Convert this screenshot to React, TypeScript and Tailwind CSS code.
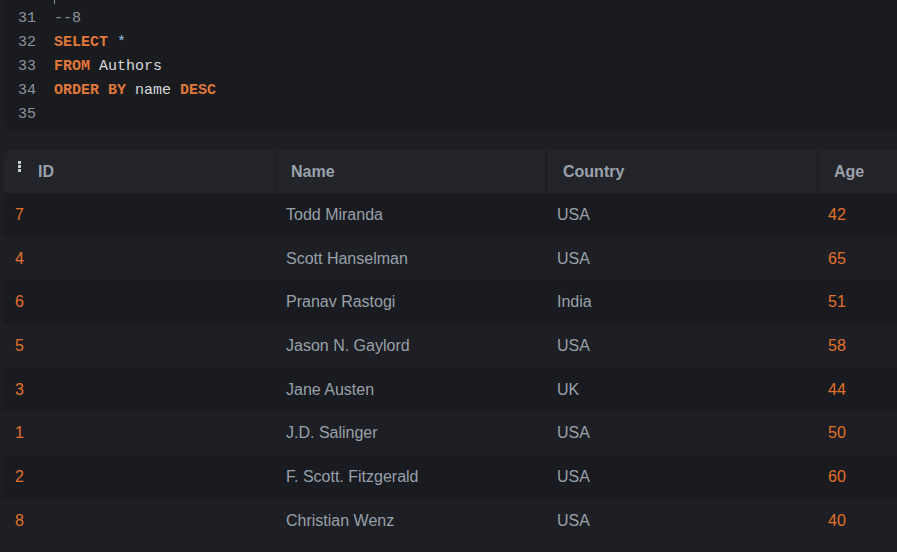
import React from "react";

const rows = [
  { id: 7, name: "Todd Miranda", country: "USA", age: 42 },
  { id: 4, name: "Scott Hanselman", country: "USA", age: 65 },
  { id: 6, name: "Pranav Rastogi", country: "India", age: 51 },
  { id: 5, name: "Jason N. Gaylord", country: "USA", age: 58 },
  { id: 3, name: "Jane Austen", country: "UK", age: 44 },
  { id: 1, name: "J.D. Salinger", country: "USA", age: 50 },
  { id: 2, name: "F. Scott. Fitzgerald", country: "USA", age: 60 },
  { id: 8, name: "Christian Wenz", country: "USA", age: 40 },
];

const K = ({ children }: { children: React.ReactNode }) => (
  <span className="font-bold text-[#e0783a]">{children}</span>
);

export default function App() {
  const lines: { n: number; c: React.ReactNode }[] = [
    { n: 31, c: <span className="text-[#8b939e]">--8</span> },
    { n: 32, c: <><K>SELECT</K> <span className="text-[#9cc3e6]">*</span></> },
    { n: 33, c: <><K>FROM</K> <span className="text-[#d6d8dc]">Authors</span></> },
    { n: 34, c: <><K>ORDER BY</K> <span className="text-[#d6d8dc]">name</span> <K>DESC</K></> },
    { n: 35, c: null },
  ];
  return (
    <div className="w-[897px] h-[552px] overflow-hidden bg-[#1e1f24] pl-[4px]" style={{ fontFamily: '"Liberation Sans", Arial, sans-serif' }}>
      <div className="relative h-[130px] bg-[#1a1b1f] rounded-bl-[8px] pt-[7px]" style={{ fontFamily: '"Liberation Mono", monospace' }}>
        <div className="absolute left-[50px] top-0 w-px h-[4px] bg-[#8b939e]" />
        {lines.map((l) => (
          <div key={l.n} className="flex h-[24px] items-center text-[15px] whitespace-pre">
            <div className="w-[32px] text-right text-[#8b939e]">{l.n}</div>
            <div className="pl-[18px]">{l.c}</div>
          </div>
        ))}
      </div>
      <div className="mt-[20px] w-[1090px]">
        <div className="flex h-[43px] bg-[#232429] rounded-tl-[6px] font-bold text-[16px] text-[#9aa1ab]">
          <div className="w-[272px] flex items-center border-r border-[#1b1c20]">
            <div className="ml-[14px] w-[3px] flex flex-col gap-[1px] mr-[17px] -mt-[10px]">
              <div className="h-[3px] bg-[#c8ccd2]" />
              <div className="h-[3px] bg-[#c8ccd2]" />
              <div className="h-[3px] bg-[#c8ccd2]" />
            </div>
            ID
          </div>
          <div className="w-[271px] flex items-center pl-[15px] border-r border-[#1b1c20]">Name</div>
          <div className="w-[271px] flex items-center pl-[16px] border-r border-[#1b1c20]">Country</div>
          <div className="w-[271px] flex items-center pl-[16px]">Age</div>
        </div>
        {rows.map((r, i) => (
          <div key={r.id} className={`flex h-[43.7px] items-center text-[16px] ${i % 2 === 0 ? "bg-[#1a1b20]" : "bg-[#1e1f24]"}`}>
            <div className="w-[272px] pl-[11px] text-[#e2712a]">{r.id}</div>
            <div className="w-[271px] pl-[10px] text-[#98a0aa]">{r.name}</div>
            <div className="w-[271px] pl-[10px] text-[#98a0aa]">{r.country}</div>
            <div className="w-[271px] pl-[10px] text-[#e2712a]">{r.age}</div>
          </div>
        ))}
      </div>
    </div>
  );
}
